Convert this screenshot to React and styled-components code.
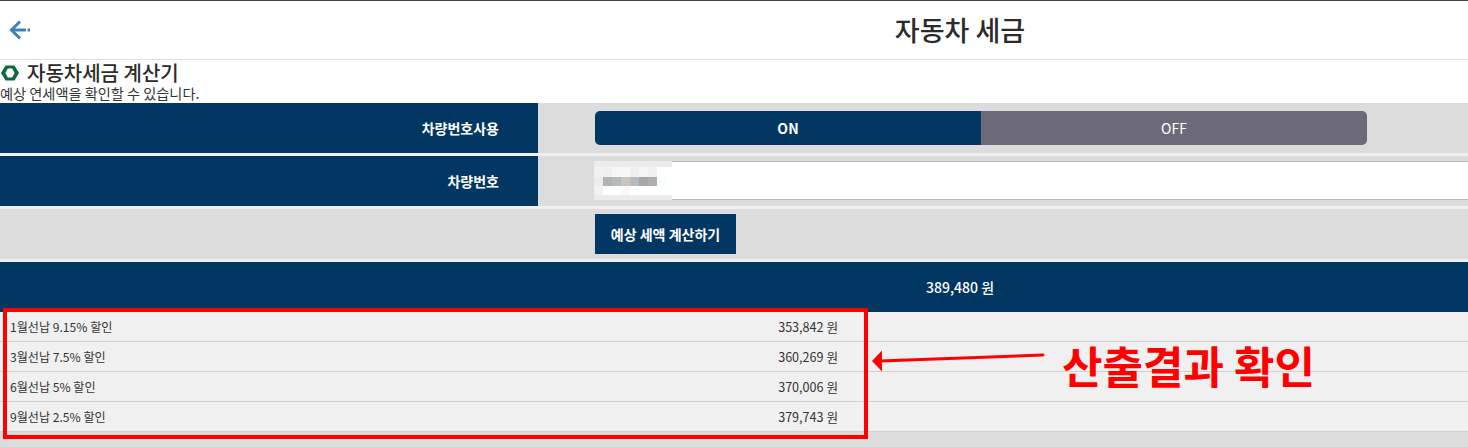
import React from "react";
import styled, { createGlobalStyle } from "styled-components";

const GlobalStyle = createGlobalStyle`
  html, body {
    margin: 0;
    padding: 0;
    background: #fff;
  }
  body {
    font-family: "Noto Sans CJK KR", "Noto Sans", sans-serif;
    color: #333;
  }
`;

const Page = styled.div`
  position: relative;
  width: 1468px;
  height: 447px;
  overflow: hidden;
  background: #dcdcdc;
`;

const Header = styled.header`
  display: grid;
  grid-template-columns: 452px 1fr;
  height: 58px;
  align-items: center;
  background: #fff;
  border-top: 1px solid #444;
  border-bottom: 1px solid #ddd;
`;

const BackButton = styled.a`
  display: flex;
  padding-left: 9px;
  color: #3b82bd;
`;

const Title = styled.h1`
  margin: 0;
  font-size: 27px;
  font-weight: 500;
  line-height: 58px;
  text-align: center;
  color: #2b2b2b;
`;

const Intro = styled.div`
  height: 43px;
  background: #fff;
`;

const Heading = styled.h2`
  display: flex;
  align-items: center;
  gap: 8px;
  margin: 0;
  font-size: 20px;
  font-weight: 500;
  line-height: 26px;
  color: #2b2b2b;
`;

const Hexagon = styled.svg`
  display: block;
  margin-left: 1px;
`;

const Description = styled.p`
  margin: -1px 0 0;
  font-size: 14.2px;
  line-height: 16px;
  color: #333;
`;

const FormRow = styled.div`
  display: grid;
  grid-template-columns: 538px 1fr;
  height: 50px;
  margin-bottom: 3px;
  background: #dcdcdc;
  box-shadow: 0 3px 0 #f0f0f0;
`;

const RowLabel = styled.div`
  display: flex;
  align-items: center;
  justify-content: flex-end;
  padding-right: 39px;
  background: #023763;
  color: #fff;
  font-size: 14px;
  font-weight: 700;
`;

const RowField = styled.div`
  display: flex;
  align-items: center;
  padding-left: 57px;
`;

const Toggle = styled.div`
  display: flex;
  width: 772px;
  height: 34px;
  border-radius: 5px;
  overflow: hidden;
`;

const ToggleOption = styled.div`
  display: flex;
  flex: 1;
  align-items: center;
  justify-content: center;
  background: ${(p) => (p.$active ? "#023763" : "#6c6a7a")};
  color: #fff;
  font-size: 14px;
  font-weight: ${(p) => (p.$active ? 700 : 400)};
`;

const PlateInput = styled.div`
  position: relative;
  flex: 1;
  height: 37px;
  margin-top: -1px;
  background: #fff;
  border-top: 1px solid #b8b8b8;
  border-bottom: 1px solid #b8b8b8;
`;

const Mosaic = styled.svg`
  position: absolute;
  left: -1px;
  top: -1px;
`;

const ActionRow = styled.div`
  display: flex;
  align-items: center;
  height: 50px;
  margin-bottom: 3px;
  padding-left: 595px;
  background: #dcdcdc;
  box-shadow: 0 3px 0 #f0f0f0;
`;

const CalcButton = styled.button`
  width: 141px;
  height: 40px;
  padding: 0;
  border: 0;
  background: #023763;
  color: #fff;
  font-family: inherit;
  font-size: 14px;
  font-weight: 700;
  cursor: pointer;
`;

const Total = styled.div`
  height: 50px;
  padding-left: 926px;
  background: #023763;
  color: #fff;
  font-size: 14px;
  font-weight: 500;
  line-height: 50px;
`;

const ResultList = styled.ul`
  margin: 0;
  padding: 0;
  list-style: none;
`;

const ResultRow = styled.li`
  display: flex;
  justify-content: space-between;
  align-items: center;
  height: 29px;
  padding: 0 630px 0 10px;
  background: #f0f0f0;
  border-bottom: 1px solid #cfcfcf;
  font-size: 12.6px;
  color: #333;
`;

const ResultName = styled.span`
  font-size: 12.1px;
`;

const HighlightBox = styled.div`
  position: absolute;
  left: 3px;
  top: 308px;
  width: 857px;
  height: 123px;
  border: 4px solid #ff0000;
  pointer-events: none;
`;

const ArrowMark = styled.svg`
  position: absolute;
  left: 870px;
  top: 348px;
`;

const Callout = styled.div`
  position: absolute;
  left: 1062px;
  top: 335px;
  color: #ff0000;
  font-size: 44px;
  font-weight: 700;
  line-height: 60px;
  white-space: nowrap;
`;

const mosaicCells = [
  [0, 0, 78, 6, "#ececec"],
  [0, 6, 9, 10, "#f2f2f2"],
  [9, 6, 9, 10, "#f0f0ee"],
  [18, 6, 18, 10, "#f6f7f9"],
  [36, 6, 9, 10, "#efefef"],
  [45, 6, 9, 10, "#f5f5f5"],
  [54, 6, 9, 10, "#f0f1f3"],
  [0, 16, 9, 9, "#efebe9"],
  [9, 16, 9, 9, "#b2b2b2"],
  [18, 16, 9, 9, "#b5bbbd"],
  [27, 16, 9, 9, "#c8c5bd"],
  [36, 16, 9, 9, "#b7bcc2"],
  [45, 16, 9, 9, "#a7a7a7"],
  [54, 16, 9, 9, "#b0b0b0"],
  [63, 16, 9, 9, "#f8fdff"],
  [0, 25, 9, 9, "#f2f2f2"],
  [27, 25, 9, 9, "#f9f9f9"],
  [0, 34, 78, 5, "#ececec"],
];

const results = [
  { name: "1월선납 9.15% 할인", amount: "353,842 원" },
  { name: "3월선납 7.5% 할인", amount: "360,269 원" },
  { name: "6월선납 5% 할인", amount: "370,006 원" },
  { name: "9월선납 2.5% 할인", amount: "379,743 원" },
];

export default function App() {
  return (
    <Page>
      <GlobalStyle />
      <Header>
        <BackButton aria-label="뒤로">
          <svg width="22" height="20" viewBox="0 0 22 20" fill="none" stroke="currentColor" strokeWidth="3">
            <path d="M11 1.5 L2.5 10 L11 18.5" />
            <path d="M2.5 10 H17" />
            <path d="M18.5 10 H21" />
          </svg>
        </BackButton>
        <Title>자동차 세금</Title>
      </Header>
      <Intro>
        <Heading>
          <Hexagon width="18" height="16" viewBox="0 0 18 16">
            <path
              d="M4.5 0.5 H13.5 L18 8 L13.5 15.5 H4.5 L0 8 Z M6.8 3.5 H11.2 L13.6 8 L11.2 12.5 H6.8 L4.4 8 Z"
              fill="#0b6b3a"
              fillRule="evenodd"
            />
          </Hexagon>
          자동차세금 계산기
        </Heading>
        <Description>예상 연세액을 확인할 수 있습니다.</Description>
      </Intro>
      <FormRow>
        <RowLabel>차량번호사용</RowLabel>
        <RowField>
          <Toggle>
            <ToggleOption $active>ON</ToggleOption>
            <ToggleOption>OFF</ToggleOption>
          </Toggle>
        </RowField>
      </FormRow>
      <FormRow>
        <RowLabel>차량번호</RowLabel>
        <RowField>
          <PlateInput>
            <Mosaic width="78" height="39" viewBox="0 0 78 39">
              {mosaicCells.map(([x, y, w, h, fill], i) => (
                <rect key={i} x={x} y={y} width={w} height={h} fill={fill} />
              ))}
            </Mosaic>
          </PlateInput>
        </RowField>
      </FormRow>
      <ActionRow>
        <CalcButton>예상 세액 계산하기</CalcButton>
      </ActionRow>
      <Total>389,480 원</Total>
      <ResultList>
        {results.map((r) => (
          <ResultRow key={r.name}>
            <ResultName>{r.name}</ResultName>
            <span>{r.amount}</span>
          </ResultRow>
        ))}
      </ResultList>
      <HighlightBox />
      <ArrowMark width="176" height="26" viewBox="0 0 176 26">
        <path d="M2 13 L12 2.5 L12 23.5 Z" fill="#ff0000" />
        <path d="M10 13 L173 7" stroke="#ff0000" strokeWidth="3" strokeLinecap="round" />
      </ArrowMark>
      <Callout>산출결과 확인</Callout>
    </Page>
  );
}
